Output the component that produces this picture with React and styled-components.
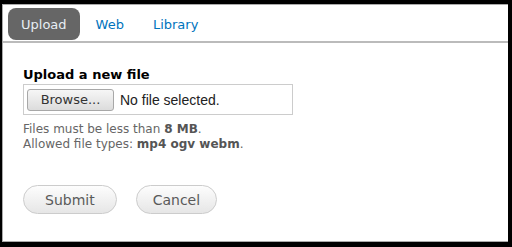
import React, { useState } from "react";
import styled, { createGlobalStyle } from "styled-components";

// page reset
const GlobalStyle = createGlobalStyle`
  html, body {
    margin: 0;
    background: #000;
  }
  body {
    padding: 4px 4px 0 2px;
    font-family: "DejaVu Sans", Verdana, sans-serif;
  }
`;

// white dialog panel
const Panel = styled.div`
  width: 506px;
  height: 238px;
  box-sizing: border-box;
  background: #fff;
  border: 1px solid #aaa;
  border-right: none;
  overflow: hidden;
`;

const TabBar = styled.ul`
  display: flex;
  gap: 3px;
  list-style: none;
  margin: 0;
  padding: 3px 0 1px 5px;
  border-bottom: 2px solid #bbb;
`;

const Tab = styled.li`
  height: 32px;
  padding: 0 13px;
  display: flex;
  align-items: center;
  border-radius: 8px;
  font-size: 13px;
  cursor: pointer;
  background: ${(props) => (props.active ? "#666" : "transparent")};
  color: ${(props) => (props.active ? "#e8eef4" : "#0074bd")};
`;

const Content = styled.div`
  padding: 24px 20px 0 20px;
`;

const Label = styled.div`
  font-size: 13px;
  font-weight: bold;
  color: #000;
  line-height: 16px;
`;

const FileField = styled.div`
  margin-top: 1px;
  width: 270px;
  height: 31px;
  box-sizing: border-box;
  border: 1px solid #ccc;
  display: flex;
  align-items: center;
  padding-left: 3px;
  gap: 6px;
`;

const Browse = styled.div`
  height: 22px;
  width: 87px;
  box-sizing: border-box;
  border: 1px solid #a8a8a8;
  border-radius: 3px;
  background: linear-gradient(#f6f6f6, #dcdcdc);
  display: flex;
  align-items: center;
  justify-content: center;
  font-size: 13px;
  color: #333;
`;

const FileName = styled.span`
  font-family: "Liberation Sans", Arial, sans-serif;
  font-size: 14px;
  color: #222;
`;

const Description = styled.div`
  margin-top: 7px;
  font-size: 12px;
  line-height: 15px;
  color: #666;
  strong {
    color: #555;
  }
`;

const Actions = styled.div`
  display: flex;
  gap: 19px;
  margin-top: 33px;
`;

const Button = styled.button`
  height: 29px;
  padding: 0 ${(props) => props.pad}px;
  box-sizing: border-box;
  border: 1px solid #ccc;
  border-radius: 15px;
  background: linear-gradient(#fdfdfd, #e6e6e6);
  font-family: "DejaVu Sans", Verdana, sans-serif;
  font-size: 14px;
  color: #5a5a5a;
`;

const App = () => {
  const [tab, setTab] = useState("Upload");
  return (
    <>
      <GlobalStyle />
      <Panel>
        <TabBar>
          {["Upload", "Web", "Library"].map((t) => (
            <Tab key={t} active={tab === t} onClick={() => setTab(t)}>
              {t}
            </Tab>
          ))}
        </TabBar>
        <Content>
          <Label>Upload a new file</Label>
          <FileField>
            <Browse>Browse...</Browse>
            <FileName>No file selected.</FileName>
          </FileField>
          <Description>
            Files must be less than <strong>8 MB</strong>.
            <br />
            Allowed file types: <strong>mp4 ogv webm</strong>.
          </Description>
          <Actions>
            <Button pad={21}>Submit</Button>
            <Button pad={16}>Cancel</Button>
          </Actions>
        </Content>
      </Panel>
    </>
  );
};

export default App;
